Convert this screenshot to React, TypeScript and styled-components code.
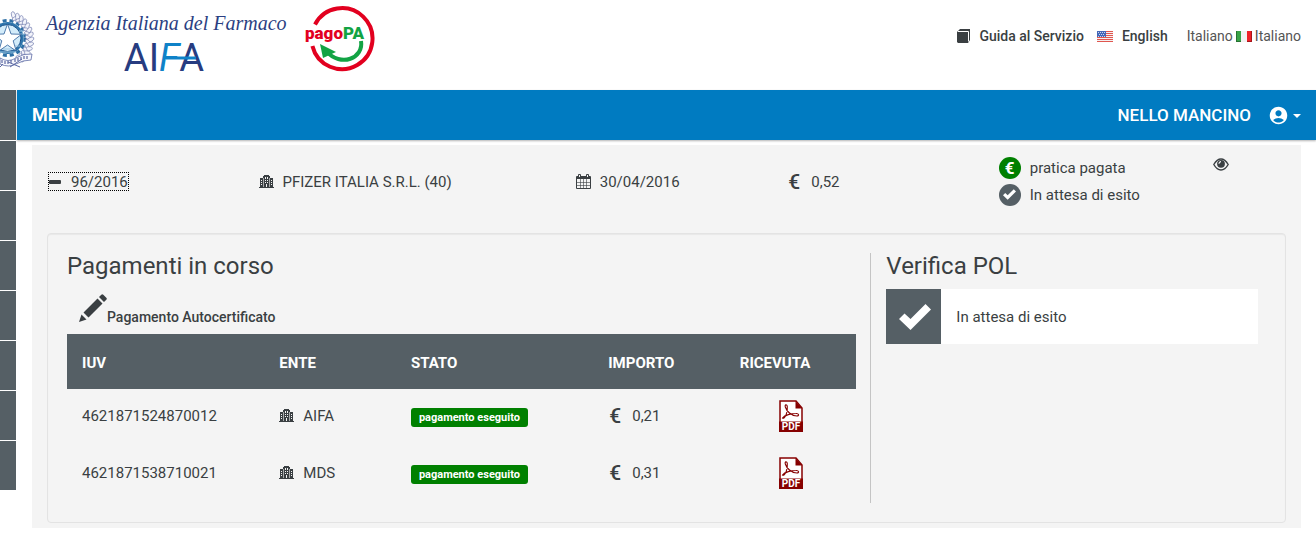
import React from "react";
import styled, { createGlobalStyle } from "styled-components";
import { MdAccountCircle } from "react-icons/md";

const GlobalStyle = createGlobalStyle`
  *, *::before, *::after { box-sizing: border-box; }
  body {
    margin: 0;
    background: #fff;
    color: #3a3f42;
    font: 400 15px/20px Roboto, "Liberation Sans", sans-serif;
  }
  a { color: inherit; text-decoration: none; }
  button { font: inherit; color: inherit; background: none; border: 0; padding: 0; cursor: pointer; }
  svg { display: block; flex: none; }
`;

const Header = styled.header`
  display: flex;
  justify-content: space-between;
  height: 90px;
`;

const Logos = styled.div`
  display: flex;
`;

const Languages = styled.nav`
  display: flex;
  align-items: center;
  height: 20px;
  margin: 26px 15px 0 0;
  font-size: 14px;
  color: #555;
  white-space: nowrap;
`;

const TopLink = styled.a<{ $gap: number; $after: number }>`
  display: flex;
  align-items: center;
  gap: ${(p) => p.$gap}px;
  margin-right: ${(p) => p.$after}px;
  font-weight: 500;
  color: #3a3f42;
`;

const CurrentLanguage = styled.span`
  display: flex;
  align-items: center;
  gap: 3px;
`;

const Body = styled.div`
  display: flex;
  align-items: flex-start;
`;

const Sidebar = styled.aside`
  width: 16px;
  margin-right: 1px;
  flex: none;
`;

const SideCell = styled.div`
  display: flex;
  align-items: center;
  height: 50px;
  background: #555f65;
  & + & { border-top: 1px solid #fff; }
`;

const Content = styled.div`
  flex: 1;
  min-width: 0;
`;

const MenuBar = styled.div`
  display: flex;
  align-items: center;
  justify-content: space-between;
  height: 50px;
  padding: 0 15px;
  background: #007bc1;
  box-shadow: 0 1px 2px rgba(0, 0, 0, 0.3);
  color: #fff;
  font-size: 18px;
  font-weight: 700;
`;

const UserButton = styled.button`
  display: flex;
  align-items: center;
  font-size: 17px;
  font-weight: 500;
  svg:first-of-type { margin: 0 4px 0 17px; }
`;

const Panel = styled.main`
  margin: 5px 15px 0;
  padding: 0 15px 5px;
  background: #f4f4f4;
`;

const Summary = styled.div`
  display: grid;
  grid-template-columns: 2fr 3fr 2fr 2fr 2fr 1fr;
  height: 88px;
  margin: 0 -15px;
`;

const SummaryCell = styled.div<{ $top: number }>`
  padding: ${(p) => p.$top}px 0 0 15px;
`;

const Toggle = styled.button`
  display: flex;
  align-items: center;
  gap: 10px;
  height: 17px;
  margin: 1px 2px;
  outline: 1px dotted #000;
`;

const IconText = styled.div`
  display: flex;
  align-items: center;
  gap: 9px;
`;

const Euro = styled.span`
  font-size: 21px;
  font-weight: 500;
  width: 14px;
  margin-left: 1px;
`;

const Status = styled.div`
  display: flex;
  align-items: center;
  gap: 9px;
  height: 27px;
`;

const Disc = styled.span<{ $color: string }>`
  display: flex;
  align-items: center;
  justify-content: center;
  width: 22px;
  height: 22px;
  border-radius: 50%;
  background: ${(p) => p.$color};
  color: #fff;
  font-size: 17px;
  font-weight: 700;
`;

const ViewButton = styled.button`
  display: block;
  margin-left: 3px;
`;

const Well = styled.section`
  display: flex;
  padding: 19px 4px;
  border: 1px solid #e3e3e3;
  border-radius: 4px;
  box-shadow: inset 0 1px 1px rgba(0, 0, 0, 0.05);
`;

const Payments = styled.div`
  flex: 0 0 66.67%;
  padding: 0 15px;
`;

const Verify = styled.div`
  flex: 1;
  margin-left: -1px;
  padding: 0 23px 0 15px;
  border-left: 1px solid #c4c4c4;
`;

const Title = styled.h2`
  margin: 0;
  font-size: 24px;
  line-height: 26px;
  font-weight: 400;
`;

const SelfCertified = styled.div`
  display: flex;
  align-items: flex-end;
  height: 48px;
  margin: 0 0 7px 12px;
  font-size: 14px;
  font-weight: 500;
  svg { margin-bottom: 5px; }
`;

const Table = styled.table`
  width: 100%;
  table-layout: fixed;
  border-collapse: collapse;
`;

const Th = styled.th<{ $width: string }>`
  width: ${(p) => p.$width};
  height: 55px;
  padding: 2px 0 0 15px;
  background: #555f65;
  color: #fff;
  font-weight: 700;
  text-align: left;
`;

const Td = styled.td`
  height: 57px;
  padding: 0 0 3px 15px;
`;

const Badge = styled.span`
  display: inline-block;
  padding: 0 8px;
  margin-top: 3px;
  border-radius: 3px;
  background: #008000;
  color: #fff;
  font-size: 11px;
  line-height: 19px;
  font-weight: 700;
  white-space: nowrap;
  vertical-align: middle;
`;

const Receipt = styled.a`
  display: block;
  width: 24px;
  margin-left: 39px;
`;

const Outcome = styled.div`
  display: flex;
  align-items: center;
  height: 55px;
  margin-top: 10px;
  background: #fff;
`;

const OutcomeIcon = styled.span`
  display: flex;
  align-items: center;
  justify-content: center;
  width: 55px;
  height: 55px;
  margin-right: 15px;
  padding-left: 3px;
  background: #555f65;
`;

function Emblem() {
  const leaves = Array.from({ length: 13 }, (_, i) => {
    const a = ((-72 + i * 11) * Math.PI) / 180;
    return { x: 8 + 22 * Math.cos(a), y: 39 + 24 * Math.sin(a), r: -72 + i * 11 };
  });
  return (
    <svg width="40" height="80" viewBox="0 0 40 80" aria-label="Repubblica Italiana" role="img">
      <circle cx="7.500" cy="38" r="17.500" fill="none" stroke="#2d6fa5" strokeWidth="3" strokeDasharray="4 3" />
      <circle cx="7.500" cy="38" r="16" fill="#2f76ad" />
      <circle cx="7.500" cy="38" r="13.500" fill="#d3ecfa" stroke="#174f88" strokeWidth="1" />
      <path d="M19 31h5M20 34h5M20 46h-5M0 52h16M2 49h14" stroke="#9bc4e0" />
      <path d="M7.500 24l3.500 10 10.500.3-8.300 6.500 3 10.200-8.700-6-8.700 6 3-10.200-8.300-6.500 10.500-.3z" fill="#fff" stroke="#2b5d98" strokeWidth=".8" />
      {leaves.map((l, i) => (
        <g key={i} transform={`translate(${l.x} ${l.y}) rotate(${l.r})`} fill="#f3f4fb" stroke="#7c86b4" strokeWidth=".7">
          <ellipse cx="1" cy="-1" rx="4" ry="2" transform="rotate(-35)" />
          <ellipse cx="-1" cy="2" rx="3" ry="1.600" transform="rotate(40)" />
        </g>
      ))}
      <path d="M0 58q8 5 16 0t16-4l-1 6q-8 0-15 4t-16 0z" fill="#f7f8fd" stroke="#5d6ba5" strokeWidth=".8" />
      <path d="M2 60v3M5 61v3M8 61v3M11 60v3M15 59v3M18 58v3M21 57v3M24 56v3M27 56v3" stroke="#3e4d90" />
      <path d="M8 62l12 5M22 59l-12 8M3 64l-3 3" stroke="#5d6ba5" fill="none" />
    </svg>
  );
}

function AifaLogo() {
  return (
    <svg width="262" height="80" viewBox="40 0 262 80" role="img" aria-label="Agenzia Italiana del Farmaco AIFA">
      <text x="46" y="30" fontFamily="'Liberation Serif', serif" fontStyle="italic" fontSize="20" fill="#2b3f82">
        Agenzia Italiana del Farmaco
      </text>
      <text x="164" y="71" textAnchor="middle" fontFamily="Roboto, sans-serif" fontSize="38" fontWeight="400" fill="#273c80">
        AI<tspan fontStyle="italic" fill="#0f82c8">F</tspan>A
      </text>
      <path d="M166 58h30" stroke="#0f82c8" strokeWidth="3" />
    </svg>
  );
}

function PagoPaLogo() {
  return (
    <svg width="74" height="80" viewBox="302 0 74 80" role="img" aria-label="pagoPA">
      <path d="M315 24.500A30.500 30.500 0 1 1 312.400 46" fill="none" stroke="#e2001f" strokeWidth="4" />
      <path d="M361 41c3 17-20 27-35 10" fill="none" stroke="#12a344" strokeWidth="4" />
      <path d="M320 44l16 8-13 6z" fill="#12a344" />
      <text x="305" y="39" fontFamily="Roboto, sans-serif" fontWeight="900" fontSize="17" fill="#e2001f">
        pago<tspan fill="#12a344">PA</tspan>
      </text>
    </svg>
  );
}

function BookIcon() {
  return (
    <svg width="13" height="14" viewBox="0 0 13 14">
      <path d="M0 3l3-3h10v11l-2 3H1l-1-1z" fill="#3a3f42" />
      <path d="M1 2.500h10.500v10" fill="none" stroke="#fff" />
    </svg>
  );
}

function UsFlag() {
  return (
    <svg width="16" height="12" viewBox="0 0 16 12" shapeRendering="crispEdges">
      <path fill="#f5f0f0" d="M0 1h16v11H0z" />
      <path d="M0 1.500h16M0 3.500h16M0 5.500h16M0 7.500h16M0 9.500h16M0 11.500h16" stroke="#e0564f" />
      <path fill="#4468b8" d="M0 1h9v6H0z" />
      <path d="M1 2.500h7M2 4.500h6M1 6.500h7" stroke="#c9d5ee" strokeDasharray="1 1" />
    </svg>
  );
}

function ItFlag() {
  return (
    <svg width="16" height="12" viewBox="0 0 16 12" shapeRendering="crispEdges">
      <path fill="#f2f2f2" d="M0 1h16v11H0z" />
      <path fill="#38a348" d="M0 1h5v11H0z" />
      <path fill="#ee2027" d="M11 1h5v11h-5z" />
      <path d="M.5 1v10.500H5M15.500 1v10.500H11" fill="none" stroke="#000" strokeOpacity=".3" />
    </svg>
  );
}

function BuildingIcon() {
  return (
    <svg width="15" height="14" viewBox="0 0 15 14" shapeRendering="crispEdges">
      <path fill="#3a3f42" d="M0 12h1V3h3V1h1V0h5v1h1v2h3v9h1v1H0z" />
      <path
        fill="#f4f4f4"
        d="M2 5h1v1H2zM2 7h1v1H2zM2 9h1v1H2zM12 5h1v1h-1zM12 7h1v1h-1zM12 9h1v1h-1zM6 2h1v2H6zM8 2h1v2H8zM6 5h1v1H6zM8 5h1v1H8zM6 7h1v1H6zM8 7h1v1H8zM7 9h1v3H7z"
      />
      <path d="M4.500 3v9M10.500 3v9" stroke="#f4f4f4" strokeOpacity=".6" />
    </svg>
  );
}

function CalendarIcon() {
  return (
    <svg width="15" height="16" viewBox="0 0 15 16">
      <path fill="#3a3f42" d="M1 2h1V1q0-1 1-1h1q1 0 1 1v1h5V1q0-1 1-1h1q1 0 1 1v1h1q1 0 1 1v11q0 1-1 1H1q-1 0-1-1V3q0-1 1-1z" />
      <path fill="#f4f4f4" d="M1 5h13v9H1zM3 1h1v2H3zM11 1h1v2h-1z" />
      <path d="M4.500 5v9M7.500 5v9M10.500 5v9M1 8.500h13M1 11.500h13" stroke="#3a3f42" strokeOpacity=".6" />
    </svg>
  );
}

function EyeIcon() {
  return (
    <svg width="16" height="13" viewBox="0 0 16 13">
      <path d="M.8 6.500Q4 1 8 1t7.200 5.500Q12 12 8 12T.8 6.500z" fill="none" stroke="#3a3f42" strokeWidth="1.400" />
      <circle cx="8" cy="5.800" r="3.900" fill="#3a3f42" />
      <path d="M6 5.800A2 2 0 0 1 8 3.700" fill="none" stroke="#f4f4f4" strokeWidth="1.200" />
    </svg>
  );
}

function PencilIcon() {
  return (
    <svg width="28" height="28" viewBox="0 0 28 28" fill="#3a3f42">
      <path d="M0 28l2.500-7.500 5 5zM4.500 18.500L18.500 4.500l5 5-14 14zM20 3l2.300-2.300q1-1 2 0l3 3q1 1 0 2L25 8z" />
    </svg>
  );
}

function CheckIcon({ size }: { size: number }) {
  return (
    <svg width={size} height={size} viewBox="0 0 32 32" fill="#fff">
      <path d="M0 18l5.500-5.500 6 5.500L26.500 3l5.500 5.500L11.500 29z" />
    </svg>
  );
}

function PdfIcon() {
  return (
    <svg width="24" height="32" viewBox="0 0 24 32">
      <path d="M1 1h16l6 7v23H1z" fill="#fff" stroke="#860000" strokeWidth="1.500" />
      <path d="M16.500 1l6.500 7.500h-6.500zM0 21.500h24V32H0z" fill="#860000" />
      <path
        d="M3.500 18c2 1.500 5.500-5 4.800-11.500-.3-2.500-2.800-2-2 .5 1.200 4 6 9 11.700 9 2.500-.2 2-2.700-1-2.500-4.500 0-11.500 1.500-13.500 4.500z"
        fill="none"
        stroke="#860000"
        strokeWidth="1.100"
      />
      <text x="12" y="30" fontSize="10" fontWeight="700" fontFamily="Roboto, sans-serif" textAnchor="middle" fill="#fff">PDF</text>
    </svg>
  );
}

const payments = [
  { iuv: "4621871524870012", ente: "AIFA", amount: "0,21" },
  { iuv: "4621871538710021", ente: "MDS", amount: "0,31" },
];

export default function App() {
  return (
    <>
      <GlobalStyle />
      <Header>
        <Logos>
          <Emblem />
          <AifaLogo />
          <PagoPaLogo />
        </Logos>
        <Languages>
          <TopLink href="#guida" $gap={9} $after={13}><BookIcon />Guida al Servizio</TopLink>
          <TopLink href="#en" $gap={9} $after={19}><UsFlag />English</TopLink>
          <CurrentLanguage>Italiano <ItFlag /> Italiano</CurrentLanguage>
        </Languages>
      </Header>
      <Body>
        <Sidebar>
          {Array.from({ length: 8 }, (_, i) => <SideCell key={i} />)}
        </Sidebar>
        <Content>
          <MenuBar>
            <button type="button">MENU</button>
            <UserButton type="button">
              NELLO MANCINO
              <MdAccountCircle size={21} />
              <svg width="8" height="8" viewBox="0 0 8 8"><path d="M0 3h8L4 7z" fill="#fff" /></svg>
            </UserButton>
          </MenuBar>
          <Panel>
            <Summary>
              <SummaryCell $top={27}>
                <Toggle type="button">
                  <svg width="12" height="4" viewBox="0 0 12 4"><rect width="12" height="4" rx="1" fill="#3a3f42" /></svg>
                  96/2016
                </Toggle>
              </SummaryCell>
              <SummaryCell $top={27}><IconText><BuildingIcon />PFIZER ITALIA S.R.L. (40)</IconText></SummaryCell>
              <SummaryCell $top={27}><IconText><CalendarIcon />30/04/2016</IconText></SummaryCell>
              <SummaryCell $top={27}><IconText><Euro>€</Euro>0,52</IconText></SummaryCell>
              <SummaryCell $top={9}>
                <Status><Disc $color="#008000">€</Disc>pratica pagata</Status>
                <Status><Disc $color="#555f65"><CheckIcon size={13} /></Disc>In attesa di esito</Status>
              </SummaryCell>
              <SummaryCell $top={13}>
                <ViewButton type="button" aria-label="Visualizza"><EyeIcon /></ViewButton>
              </SummaryCell>
            </Summary>
            <Well>
              <Payments>
                <Title>Pagamenti in corso</Title>
                <SelfCertified><PencilIcon />Pagamento Autocertificato</SelfCertified>
                <Table>
                  <thead>
                    <tr>
                      <Th $width="25%">IUV</Th>
                      <Th $width="16.67%">ENTE</Th>
                      <Th $width="25%">STATO</Th>
                      <Th $width="16.67%">IMPORTO</Th>
                      <Th $width="16.66%">RICEVUTA</Th>
                    </tr>
                  </thead>
                  <tbody>
                    {payments.map((p) => (
                      <tr key={p.iuv}>
                        <Td>{p.iuv}</Td>
                        <Td><IconText><BuildingIcon />{p.ente}</IconText></Td>
                        <Td><Badge>pagamento eseguito</Badge></Td>
                        <Td><IconText><Euro>€</Euro>{p.amount}</IconText></Td>
                        <Td><Receipt href={`#${p.iuv}`} aria-label="Ricevuta PDF"><PdfIcon /></Receipt></Td>
                      </tr>
                    ))}
                  </tbody>
                </Table>
              </Payments>
              <Verify>
                <Title>Verifica POL</Title>
                <Outcome>
                  <OutcomeIcon><CheckIcon size={32} /></OutcomeIcon>
                  In attesa di esito
                </Outcome>
              </Verify>
            </Well>
          </Panel>
        </Content>
      </Body>
    </>
  );
}
